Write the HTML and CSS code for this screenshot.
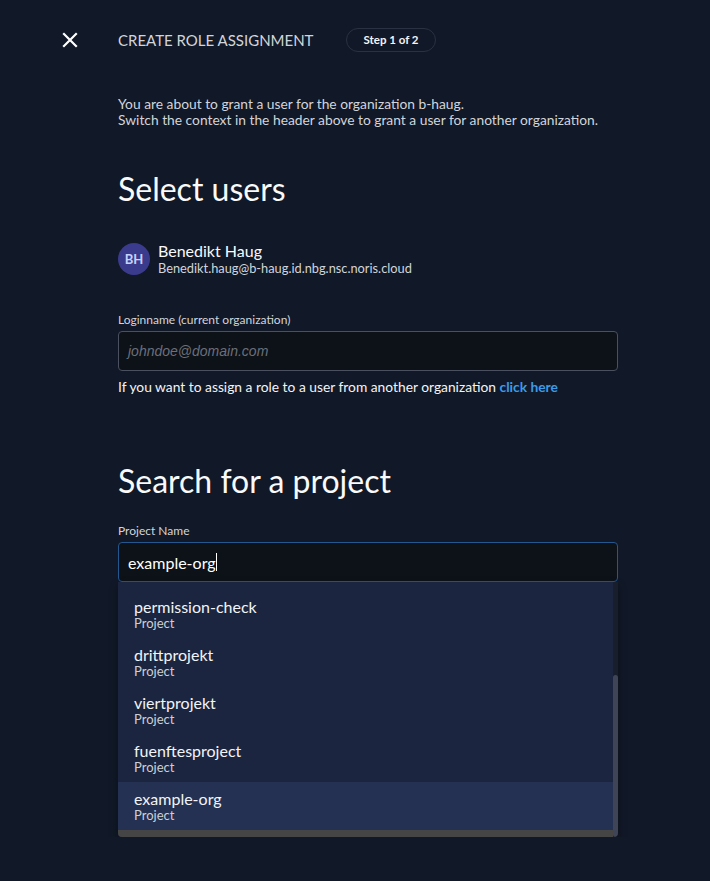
FILE: index.html
```html
<!DOCTYPE html>
<html lang="en">
<head>
    <meta charset="UTF-8">
    <meta name="viewport" content="width=device-width, initial-scale=1.0">
    <title>Create Role Assignment</title>
    <link rel="stylesheet" href="styles.css">
</head>
<body>

    <div class="header">
        <button class="close-btn" aria-label="close">
            <svg width="16" height="16" viewBox="0 0 16 16"><path d="M2 2 L14 14 M14 2 L2 14" stroke="#ffffff" stroke-width="2.2" stroke-linecap="square"/></svg>
        </button>
        <span class="title">CREATE ROLE ASSIGNMENT</span>
        <span class="step">Step 1 of 2</span>
    </div>

    <div class="container">
        <p class="desc">You are about to grant a user for the organization b-haug.<br>Switch the context in the header above to grant a user for another organization.</p>

        <h1>Select users</h1>

        <div class="user">
            <div class="avatar">BH</div>
            <div class="user-info">
                <div class="user-name">Benedikt Haug</div>
                <div class="user-mail">Benedikt.haug@b-haug.id.nbg.nsc.noris.cloud</div>
            </div>
        </div>

        <label class="field-label">Loginname (current organization)</label>
        <div class="input">
            <span class="placeholder">johndoe@domain.com</span>
        </div>
        <p class="hint">If you want to assign a role to a user from another organization <a href="#">click here</a></p>

        <h1 class="second">Search for a project</h1>

        <label class="field-label">Project Name</label>
        <div class="input focused">
            <span class="value">example-org</span><span class="caret"></span>
        </div>
        <div class="dropdown">
            <div class="list">
                <div class="option">
                    <div class="opt-name">zweitprojekt</div>
                    <div class="opt-type">Project</div>
                </div>
                <div class="option">
                    <div class="opt-name">permission-check</div>
                    <div class="opt-type">Project</div>
                </div>
                <div class="option">
                    <div class="opt-name">drittprojekt</div>
                    <div class="opt-type">Project</div>
                </div>
                <div class="option">
                    <div class="opt-name">viertprojekt</div>
                    <div class="opt-type">Project</div>
                </div>
                <div class="option">
                    <div class="opt-name">fuenftesproject</div>
                    <div class="opt-type">Project</div>
                </div>
                <div class="option active">
                    <div class="opt-name">example-org</div>
                    <div class="opt-type">Project</div>
                </div>
                <div class="hbar"></div>
            </div>
            <div class="scroll-track"><div class="scroll-thumb"></div></div>
        </div>
    </div>

</body>
</html>
```

FILE: styles.css
```css
body {
    font-family: Lato, "Noto Sans", sans-serif;
    background-color: #111827;
    color: #f3f4f6;
    margin: 0;
    padding: 0;
}
.header {
    display: flex;
    align-items: center;
    height: 24px;
    padding: 28px 0 0 62px;
}
.close-btn {
    width: 16px;
    height: 16px;
    padding: 0;
    margin: 0 40px 0 0;
    border: none;
    background: none;
    display: flex;
}
.title {
    font-size: 15px;
    color: #d1d5db;
}
.step {
    margin-left: 33px;
    height: 22px;
    padding: 0 16px;
    border: 1px solid #2a3142;
    border-radius: 12px;
    font-size: 11.5px;
    font-weight: bold;
    line-height: 22px;
    color: #f3f4f6;
}
.container {
    width: 500px;
    margin-left: 118px;
}
.desc {
    margin: 44px 0 0;
    font-size: 13.8px;
    line-height: 16px;
    color: #d1d5db;
}
h1 {
    margin: 42px 0 0;
    font-size: 32px;
    font-weight: normal;
    line-height: 38px;
    color: #f9fafb;
}
h1.second {
    margin-top: 67px;
}
.user {
    display: flex;
    align-items: center;
    gap: 8px;
    margin-top: 34px;
}
.avatar {
    width: 32px;
    height: 32px;
    border-radius: 50%;
    background-color: #3b3b8e;
    color: #c7d2fe;
    font-size: 13px;
    font-weight: bold;
    display: flex;
    align-items: center;
    justify-content: center;
}
.user-name {
    font-size: 16px;
    line-height: 18px;
    color: #f9fafb;
}
.user-mail {
    font-size: 12.8px;
    line-height: 16px;
    color: #d1d5db;
}
.field-label {
    display: block;
    margin-top: 37px;
    font-size: 12px;
    line-height: 14px;
    color: #d1d5db;
}
h1.second + .field-label {
    margin-top: 24px;
}
.input {
    margin-top: 4px;
    height: 38px;
    border: 1px solid #4b5060;
    border-radius: 4px;
    background-color: #0d1118;
    display: flex;
    align-items: center;
    padding: 0 9px;
}
.input.focused {
    border-color: #24568f;
}
.placeholder {
    font-family: "Liberation Sans", Arial, sans-serif;
    font-style: italic;
    font-size: 14px;
    color: #6b6f78;
}
.value {
    font-size: 16px;
    color: #ffffff;
}
.caret {
    width: 1px;
    height: 18px;
    background-color: #ffffff;
}
.hint {
    margin: 8px 0 0;
    font-size: 13.8px;
    line-height: 16px;
    color: #f3f4f6;
}
.hint a {
    color: #3b9be8;
    font-weight: bold;
    text-decoration: none;
}
.dropdown {
    display: flex;
    height: 255px;
    overflow: hidden;
    border-radius: 0 0 4px 4px;
    box-shadow: 0 4px 8px rgba(0, 0, 0, 0.35);
}
.list {
    flex: 1;
    background-color: #1b2540;
    margin-top: -40px;
}
.option {
    height: 48px;
    padding: 8px 16px 0;
    box-sizing: border-box;
}
.option.active {
    background-color: #243152;
}
.opt-name {
    font-size: 16px;
    line-height: 18px;
    color: #f3f4f6;
}
.opt-type {
    font-size: 13px;
    line-height: 14px;
    color: #cbd0d8;
}
.hbar {
    height: 7px;
    background-color: #454545;
}
.scroll-track {
    width: 5px;
    background-color: #181e2c;
    display: flex;
    flex-direction: column;
    justify-content: flex-end;
}
.scroll-thumb {
    height: 162px;
    background-color: #3f4556;
    border-radius: 3px;
}
```
